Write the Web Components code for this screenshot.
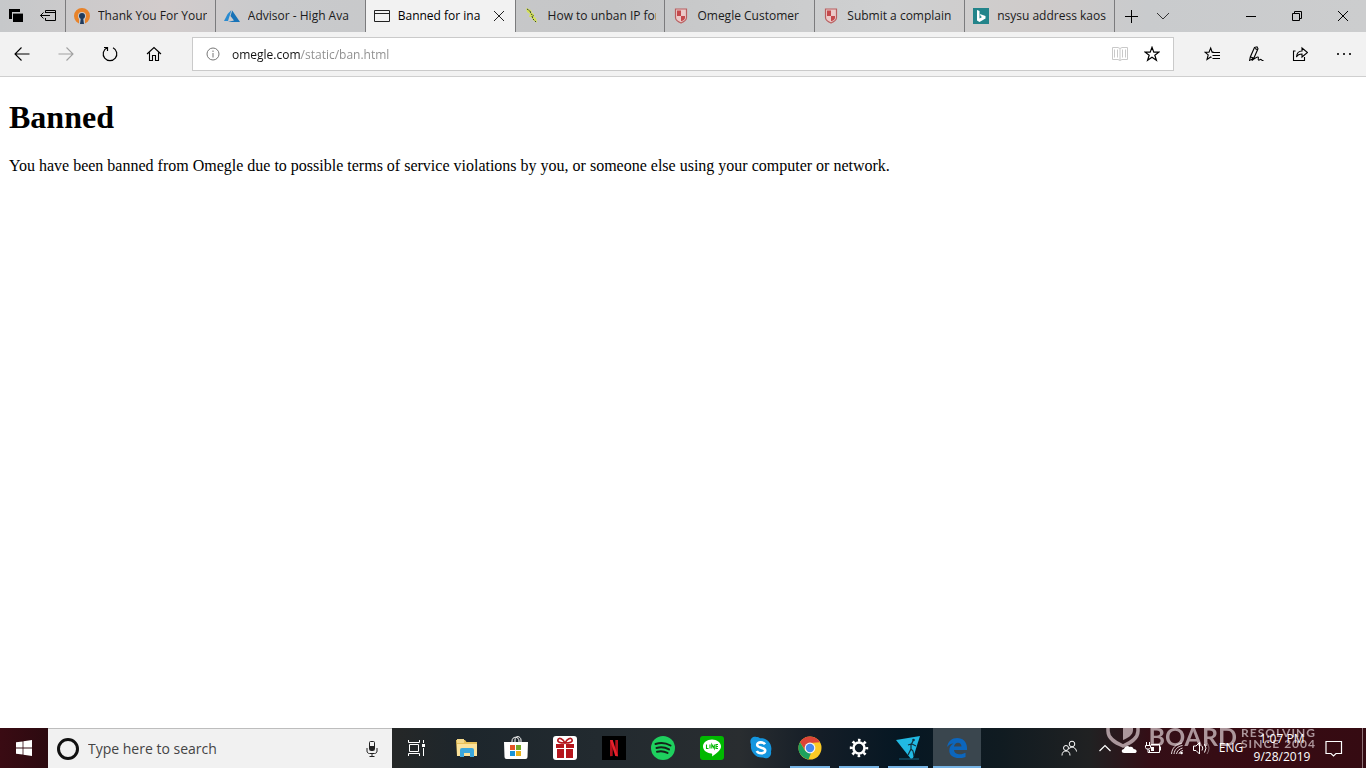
<!DOCTYPE html>
<html lang="en">
<head>
<meta charset="utf-8">
<title>Banned for inappropriate behavior</title>
<style>
  html, body { margin: 0; height: 100%; }
  body { font-family: "Open Sans", "Noto Sans", sans-serif; font-size: 12px; color: #1b1b1b; background: #fff; overflow: hidden; }
</style>
</head>
<body>
<desk-screen></desk-screen>

<script>
const RESET = `
  :host, *, *::before, *::after { box-sizing: border-box; }
  button { font: inherit; color: inherit; background: none; border: 0; padding: 0; margin: 0; display: flex; align-items: center; justify-content: center; }
  svg { display: block; flex: none; }
`;

const ICONS = {
  setaside: [16, 16, `<path d="M1 1h11v3H4v7H1z" fill="#000"/><path d="M5 5h10v9H5z" fill="#000"/><path d="M5 5.500h10" stroke="#777" stroke-width="1"/>`],
  restoretabs: [16, 16, `<path d="M5.500 5V2.500h10v10h-10V10M5.500 4.500h10M.5 7.500H10M3.500 4.500l-3 3 3 3" fill="none" stroke="#000"/>`],
  vpn: [18, 18, `<circle cx="9" cy="9" r="6" fill="none" stroke="#e8832a" stroke-width="4"/><path d="M6 12h6v6H6z" fill="#c8c8ca"/><circle cx="9" cy="9" r="3" fill="#1f3a5c"/><path d="M8 10h2l1 7H7z" fill="#1f3a5c"/>`],
  azure: [16, 16, `<path d="M7.500 2 3.600 6 0 13h4z" fill="#2a8bd0"/><path d="M8.200 2.500 16 14H4l6-1.500L6.500 8z" fill="#1873b8"/>`],
  page: [16, 16, `<path d="M.5 2.500h15v11H.5zM.5 5.500h15" fill="none" stroke="#222"/>`],
  bolt: [16, 16, `<path d="m2 0 5 2 1 3 2 1 0 3 2 1 1 5-4-3-2-3H5l1-3-3-2z" fill="#d5e25a"/><path d="m3 1 3 2M6 3l1 3 3 2M8 8l1 3 3 3" fill="none" stroke="#38432b" stroke-dasharray="2 1"/>`],
  shield: [16, 16, `<path d="M2.500 1h11v8.500c0 3-3 4.500-5.500 5.500-2.500-1-5.500-2.500-5.500-5.500z" fill="#ebc9c8" stroke="#b95f60" stroke-width="1.200"/><path d="M4 2.500h4V8H4zM8 8h4v2c0 1.500-2 2.500-4 3.300z" fill="#c4494c"/>`],
  bing: [16, 16, `<path d="M0 0h16v16H0z" fill="#23848a"/><path d="m4 2 2.500 1v7.500L9 9 7.700 8.200 6.900 6 12.500 8v2.500L6.500 14 4 12.500z" fill="#fff"/>`],
  x10: [12, 12, `<path d="m1 1 10 10M11 1 1 11" stroke="#222" fill="none"/>`],
  plus: [14, 14, `<path d="M7.500 1v13M1 7.500h13" stroke="#000" fill="none"/>`],
  chevdown: [14, 14, `<path d="m1 4 6 6 6-6" stroke="#333" fill="none"/>`],
  min: [10, 10, `<path d="M0 5.500h10" stroke="#000"/>`],
  restore: [12, 12, `<path d="M1.500 3.500h7v7h-7zM3.500 3V1.500h7v7H9" stroke="#000" fill="none"/>`],
  close: [12, 12, `<path d="m1 1 10 10M11 1 1 11" stroke="#000" fill="none"/>`],
  back: [16, 16, `<path d="M15.500 8H1M7.500 1.500 1 8l6.500 6.500" stroke="#000" fill="none" stroke-width="1.100"/>`],
  fwd: [16, 16, `<path d="M.5 8H15M8.500 1.500 15 8l-6.500 6.500" stroke="#a0a0a0" fill="none" stroke-width="1.100"/>`],
  reload: [16, 16, `<path d="M5 1.700A6.800 6.800 0 1 0 11 1.700M2 1.500h3.500V5" stroke="#000" fill="none" stroke-width="1.200"/>`],
  home: [16, 16, `<path d="m1 8 7-6.500L15 8M3.500 6.500v8h3v-5h3v5h3v-8" stroke="#000" fill="none" stroke-width="1.100"/>`],
  info: [14, 14, `<circle cx="7" cy="7" r="6" fill="none" stroke="#777"/><path d="M7 6v4.500M7 3.500V5" stroke="#777"/>`],
  book: [16, 16, `<path d="M.5 1.500H6l2 1 2-1h5.500v12H10l-2 1-2-1H.5zM8 2.500v12M2.500 3.500v8M5.500 3.500v8M10.500 3.500v8M13.500 3.500v8" stroke="#c9c9c9" fill="none"/>`],
  star: [16, 16, `<path d="m8 1.300 1.800 4.900h5.100l-4.100 3.100 1.600 5L8 11.200l-4.400 3.100 1.600-5-4.100-3.100h5.100z" stroke="#000" fill="none" stroke-width="1.200"/>`],
  hub: [16, 16, `<path d="M9.500 6.100H8.100L6.700 2 5 6.200H1l3.200 2.700L3 13.500 6.700 11l.8.500M8.500 6.500H16M8.500 9.500H16M8.500 12.500H16" stroke="#000" fill="none" stroke-width="1.100"/>`],
  pen: [16, 16, `<path d="m1.500 15 .8-4L6.500 1.500 9 .8l1 2-4 9-3.500 2.500M2.500 11l3 1M7 2.500l2 1M4 14.500c3-2 4.500-4 6-3.500 1.200.5-.5 2.500.5 3s1.500-1 2.500-.5 1 1.300 2.500 1" stroke="#000" fill="none" stroke-width="1.100"/>`],
  share: [16, 16, `<path d="M3.500 5H1.500v9.500h11V11M4.500 11c.3-4 2.500-6 5.500-6V2l5.500 4.500L10 11V8C7 8 5.500 9 4.500 11z" stroke="#000" fill="none" stroke-width="1.100"/>`],
  dots: [16, 16, `<path d="M1 7h2v2H1zM7 7h2v2H7zM13 7h2v2h-2z" fill="#333"/>`],
  windows: [16, 16, `<path d="m0 2.300 6.600-.9v6.200H0zM7.400 1.300 16 0v7.600H7.400zM0 8.400h6.600v6.200L0 13.700zM7.400 8.400H16V16l-8.600-1.300z" fill="#fff"/>`],
  mic: [12, 18, `<rect x="3.500" y="1.500" width="5" height="9" rx="1" fill="none" stroke="#222"/><path d="M4 6h4v4H4z" fill="#222"/><path d="M1 8v3c0 1.500 1 2.500 2.500 2.500h5c1.500 0 2.500-1 2.500-2.500V8M6 13.500V16M3.500 16.500h5" stroke="#222" fill="none"/>`],
  taskview: [18, 16, `<path d="M1.500 0v2.500h11V0M1.500 16v-2.500h11V16M2.500 4.500v7h9v-7zM16.500 0v3M16.500 8v8" stroke="#fff" fill="none"/><path d="M15 4h3v3h-3z" fill="#fff"/>`],
  files: [22, 20, `<path d="M0 2h9l1.500 2H21v14H1z" fill="#e8c15a"/><path d="M1 1h7v4H1z" fill="#f3d88a"/><path d="M1 6h20v12H1z" fill="#fbe29b"/><path d="M4 19v-7q0-2 2-2h10q2 0 2 2v7h-4v-4H8v4z" fill="#3ba7dc"/>`],
  store: [24, 24, `<path d="M8 7V5c0-5 7-5 7 0v2M11 7V4c0-5 6-4 6 0v3" stroke="#fff" fill="none"/><path d="M0 6h24l-.5 15q0 2-2 2h-19q-2 0-2-2z" fill="#fff"/><path d="M6 9h5v5H6z" fill="#e55426"/><path d="M12 9h5v5h-5z" fill="#75a827"/><path d="M6 15h5v5H6z" fill="#1794d8"/><path d="M12 15h5v5h-5z" fill="#e7b21c"/>`],
  gift: [24, 24, `<rect width="24" height="24" rx="3" fill="#fff"/><path d="M3 8h8v4H3zM13 8h8v4h-8zM4 13h7v9H4zM13 13h7v9h-7z" fill="#b5161d"/><path d="M12 7C7 7 4 6 5 3.500S10 3 12 7c2-4 6-6 7-3.500S17 7 12 7z" fill="none" stroke="#b5161d" stroke-width="1.600"/>`],
  netflix: [24, 24, `<path d="M0 0h24v24H0z" fill="#000"/><path d="M8 4h2.700v16L8 20.300zM13.300 4H16v16.300l-2.700-.3z" fill="#b3101a"/><path d="M8 4h2.700L16 20.300l-2.700-.3z" fill="#e8222c"/>`],
  spotify: [24, 24, `<circle cx="12" cy="12" r="12" fill="#1ed05e"/><path d="M4.500 8c5-1.500 10.500-1 15 1.500M5.500 12c4-1.200 8.500-.8 12.500 1.400M6 15.700c3.500-1 7-.7 10.500 1.200" stroke="#14231a" fill="none" stroke-width="2" stroke-linecap="round"/>`],
  line: [24, 24, `<rect width="24" height="24" rx="3" fill="#00b800"/><path d="M12 3.500c5 0 9 3 9 7 0 3.500-4 6.500-9 10 .5-2 .2-3-.5-3.100C6.500 17 3 14.200 3 10.500c0-4 4-7 9-7z" fill="#fff"/><path d="M6.500 8.500v4h2M10 8.500v4M11.800 12.500v-4l2.500 4v-4M18 8.500h-2v4h2M16 10.500h2" stroke="#00b800" fill="none" stroke-width="1.100"/>`],
  skype: [24, 24, `<path d="M7.500 1C3 0 0 4 2 8.500 1 15 6 22 14 21.500c4 2.500 9-1 8-6C24 8 18 1.500 11 2.200 10 1.500 9 1 7.500 1z" fill="#1496df"/><path d="M16 8.200C14.500 5.800 8 5.500 8.200 9c.2 3.200 8 2.200 8 5.600 0 3.500-7 3.500-8.400.4" stroke="#fff" fill="none" stroke-width="2.600"/>`],
  chrome: [24, 24, `<circle cx="12" cy="12" r="11.500" fill="#fbc925"/><path d="M2 6.200A11.500 11.500 0 0 1 22 6.300L12 7 7 14z" fill="#dc4437"/><path d="M2 6.200 7.300 15 13 17l-2.500 6.400A11.500 11.500 0 0 1 2 6.200z" fill="#1fa15d"/><circle cx="12" cy="12" r="5.400" fill="#f4f4f4"/><circle cx="12" cy="12" r="4.200" fill="#4688ef"/>`],
  gear: [20, 20, `<circle cx="10" cy="10" r="5.500" fill="none" stroke="#fff" stroke-width="2.600"/><circle cx="10" cy="10" r="7.700" fill="none" stroke="#fff" stroke-width="3" stroke-dasharray="2.500 3.548" stroke-dashoffset="1.250"/>`],
  proxy: [26, 24, `<path d="m1 4 24-4-7 22-2 1z" fill="#21b9e3"/><path d="m18 5-2 4v4l-3 6M17 8l4 2M16 8l-3 1M16 13l2 2 1 5" stroke="#12313f" fill="none" stroke-width="1.200"/><circle cx="18.500" cy="4" r="1.300" fill="#12313f"/><path d="M4 23h20" stroke="#176784"/>`],
  edge: [20, 20, `<path d="M0 9C1.200 3 5 0 10.200 0 16 0 20 4 20 10v2H7c.2 3 3 4.200 6 4.200 2 0 4-.6 5.500-1.500V19c-1.500.8-4 1.200-6.500 1.200C6 20 2.300 17 2.300 12.500c0-3 1.500-5.500 4.200-7C3.800 5.700 1.500 7 0 9zm7-.5h7.500C14.500 6 13 4.700 11 4.700S7.400 6.200 7 8.500z" fill="#0c66bd"/>`],
  people: [16, 16, `<circle cx="5" cy="8" r="2.500" fill="none" stroke="#fff"/><circle cx="11" cy="4" r="2.800" fill="none" stroke="#fff"/><path d="M1 15.500c0-3 1.500-4.500 4-4.500s4 1.500 4 4.500M8 8.500c3-2.500 7-1 7.500 3" stroke="#fff" fill="none"/>`],
  chevup: [14, 14, `<path d="m1.500 10 5.500-5.500L12.500 10" stroke="#fff" fill="none" stroke-width="1.200"/>`],
  cloud: [16, 16, `<path d="M3 13c-3 0-3-4 0-4 .5-3 4-4 5.500-2 2-1 4 .3 4 2C16.500 9 16.500 13 13.500 13z" fill="#fff"/>`],
  battery: [16, 16, `<path d="M6 4.500h8.500v8H4.500V10M15.500 6.500v4M1.500 2v3M4.500 2v3M.5 5.500h5v2l-1 1.500h-3l-1-1.500zM3 9v3.500h2" stroke="#fff" fill="none"/><path d="M6 7h3v4H6z" fill="#fff"/>`],
  wifi: [16, 16, `<path d="M2.500 14C3 8 7 4 13 3M5 14c.5-4.500 3.500-7.500 8.500-8.500M7.500 14c.5-3 2.500-5 6-6M10 14c.2-1.500 1.500-3 4-3.500" stroke="#e7dadd" fill="none"/><circle cx="12.500" cy="13" r="1.300" fill="#fff"/>`],
  sound: [18, 16, `<path d="M1.500 6v4.500H4l3.500 3.500V2.500L4 6zM10 6q1.500 2 0 4.500M12.500 4q3 4 0 8.500" stroke="#fff" fill="none"/><path d="M15 2.500q4 5.500 0 11.500" stroke="#8c7177" fill="none"/>`],
  note: [18, 18, `<path d="M1 2.500h15.500v12H11L8.500 17 6 14.500H1z" stroke="#fff" fill="none" stroke-width="1.200"/>`],
  crest: [34, 40, `<path d="M2 0v22c0 8 8 12 15 15 7-3 15-7 15-15V0" fill="none" stroke="currentColor" stroke-width="3.500"/><path d="M17 0h10v21c0 5-5 8-10 10z" fill="currentColor"/>`]
};

class UiIcon extends HTMLElement {
  constructor() { super(); this.attachShadow({ mode: "open" }); }
  connectedCallback() {
    const [w, h, body] = ICONS[this.getAttribute("name")];
    this.shadowRoot.innerHTML = `<style>:host{display:block;flex:none}svg{display:block}</style>
      <svg width="${w}" height="${h}" viewBox="0 0 ${w} ${h}" aria-hidden="true">${body}</svg>`;
  }
}
customElements.define("ui-icon", UiIcon);

function define(name, html) {
  const template = document.createElement("template");
  template.innerHTML = html;
  customElements.define(name, class extends HTMLElement {
    constructor() {
      super();
      this.attachShadow({ mode: "open" }).append(template.content.cloneNode(true));
    }
    connectedCallback() {
      const label = this.getAttribute("label");
      const button = this.shadowRoot.querySelector("button");
      if (label && button) button.setAttribute("aria-label", label);
    }
  });
}

define("tool-button", `<style>${RESET}
  :host { display: block; width: 44px; height: 100%; flex: none; }
  button { width: 100%; height: 100%; }
</style><button type="button"><slot></slot></button>`);

define("browser-tab", `<style>${RESET}
  :host { display: flex; flex: 0 1 150px; min-width: 0; border-left: 1px solid #7b7b7d; }
  :host([active]) { background: #f2f2f2; color: #000; }
  .tab { flex: 1; min-width: 0; height: 100%; padding: 0 8px; gap: 8px; justify-content: flex-start; }
  .icon { width: 16px; display: flex; justify-content: center; flex: none; }
  .title { flex: 1; min-width: 0; overflow: hidden; white-space: nowrap; text-align: left; line-height: 20px; }
  .end { display: none; }
  :host([active]) .end { display: flex; align-items: center; padding-right: 10px; }
</style>
<button class="tab" type="button"><span class="icon"><slot name="icon"></slot></span><span class="title"><slot></slot></span></button>
<span class="end"><slot name="close"></slot></span>`);

define("tab-strip", `<style>${RESET}
  :host { display: flex; height: 32px; flex: none; background: linear-gradient(90deg, #c6c8ca, #d2cccc 12%, #c9cacc 20%, #c5c6c7 45%, #cfd0d1 65%, #cfcbca 76%, #c9cbcd 84%, #cccdce); }
  .lead { display: flex; width: 65px; flex: none; }
  .tabs { display: flex; flex: 0 1 1050px; min-width: 0; border-right: 1px solid #7b7b7d; }
  .extra { display: flex; }
  .window { display: flex; margin-left: auto; }
  .lead tool-button, .extra tool-button { width: 32px; }
  .window tool-button { width: 46px; }
  .small { width: 12px; }
</style>
<div class="lead">
  <tool-button label="Tabs you've set aside"><ui-icon name="setaside"></ui-icon></tool-button>
  <tool-button label="Set these tabs aside"><ui-icon name="restoretabs"></ui-icon></tool-button>
</div>
<div class="tabs">
  <browser-tab><ui-icon slot="icon" name="vpn"></ui-icon>Thank You For Your</browser-tab>
  <browser-tab><ui-icon slot="icon" name="azure"></ui-icon>Advisor - High Ava</browser-tab>
  <browser-tab active><ui-icon slot="icon" name="page"></ui-icon>Banned for ina<tool-button class="small" slot="close" label="Close tab"><ui-icon name="x10"></ui-icon></tool-button></browser-tab>
  <browser-tab><ui-icon slot="icon" name="bolt"></ui-icon>How to unban IP for</browser-tab>
  <browser-tab><ui-icon slot="icon" name="shield"></ui-icon>Omegle Customer</browser-tab>
  <browser-tab><ui-icon slot="icon" name="shield"></ui-icon>Submit a complain</browser-tab>
  <browser-tab><ui-icon slot="icon" name="bing"></ui-icon>nsysu address kaos</browser-tab>
</div>
<div class="extra">
  <tool-button label="New tab"><ui-icon name="plus"></ui-icon></tool-button>
  <tool-button label="Show tab previews"><ui-icon name="chevdown"></ui-icon></tool-button>
</div>
<div class="window">
  <tool-button label="Minimize"><ui-icon name="min"></ui-icon></tool-button>
  <tool-button label="Restore"><ui-icon name="restore"></ui-icon></tool-button>
  <tool-button label="Close"><ui-icon name="close"></ui-icon></tool-button>
</div>`);

define("address-bar", `<style>${RESET}
  :host { display: flex; align-items: center; height: 45px; flex: none; background: #f2f2f2; border-bottom: 1px solid #cfcfcf; }
  .box { display: flex; align-items: center; flex: 1; min-width: 0; height: 34px; margin: 0 16px; padding: 0 5px 0 13px; gap: 12px; background: #fff; border: 1px solid #cacaca; }
  .nav { display: flex; height: 100%; width: 176px; flex: none; }
  .tools { display: flex; height: 100%; flex: none; }
  .marks { display: flex; height: 100%; }
  .marks tool-button { width: 32px; }
  input { flex: 1; min-width: 0; height: 20px; border: 0; padding: 0; outline: 0; font: inherit;
    background: linear-gradient(90deg, #111 69px, #8c8c8c 69px) text; -webkit-text-fill-color: transparent; }
</style>
<div class="nav">
  <tool-button label="Back"><ui-icon name="back"></ui-icon></tool-button>
  <tool-button label="Forward"><ui-icon name="fwd"></ui-icon></tool-button>
  <tool-button label="Refresh"><ui-icon name="reload"></ui-icon></tool-button>
  <tool-button label="Home"><ui-icon name="home"></ui-icon></tool-button>
</div>
<div class="box">
  <ui-icon name="info"></ui-icon>
  <input type="text" aria-label="Address" value="omegle.com/static/ban.html">
  <div class="marks">
    <tool-button label="Reading view"><ui-icon name="book"></ui-icon></tool-button>
    <tool-button label="Add to favorites"><ui-icon name="star"></ui-icon></tool-button>
  </div>
</div>
<div class="tools">
  <tool-button label="Favorites"><ui-icon name="hub"></ui-icon></tool-button>
  <tool-button label="Add notes"><ui-icon name="pen"></ui-icon></tool-button>
  <tool-button label="Share"><ui-icon name="share"></ui-icon></tool-button>
  <tool-button label="Settings and more"><ui-icon name="dots"></ui-icon></tool-button>
</div>`);

define("ban-page", `<style>
  :host { display: block; flex: 1; min-height: 0; overflow: auto; padding: 22px 9px 0; background: #fff; color: #000; font: 16px/18px "Liberation Serif", "Times New Roman", serif; }
  h1 { font-size: 32px; line-height: 37px; margin: 0 0 21px; }
  p { margin: 0; }
</style>
<h1>Banned</h1>
<p>You have been banned from Omegle due to possible terms of service violations by you, or someone else using your computer or network.</p>`);

define("task-button", `<style>${RESET}
  :host { display: flex; width: 48px; height: 100%; flex: none; position: relative; }
  button { width: 100%; height: 100%; }
  :host([running]) { padding: 0 4px; }
  :host([running]) button { border-bottom: 2px solid #76b3e4; padding-top: 2px; }
  :host([current]) { padding: 0; background: #3a464e; }
</style><button type="button"><slot></slot></button>`);

define("site-watermark", `<style>${RESET}
  :host { display: flex; position: absolute; right: 50px; bottom: 19px; align-items: flex-end; gap: 4px; color: #b9a5aa; opacity: .9; font-family: Lato, sans-serif; white-space: nowrap; pointer-events: none; }
  .name { font-size: 25px; line-height: 26px; font-weight: 700; margin-left: 4px; }
  .motto { font-size: 12px; line-height: 11px; font-weight: 700; letter-spacing: 1px; }
  .motto span { display: block; }
</style>
<ui-icon name="crest"></ui-icon><span class="name">BOARD</span><span class="motto"><span>RESOLVING</span><span>SINCE 2004</span></span>`);

define("task-bar", `<style>${RESET}
  :host { display: flex; position: relative; height: 40px; flex: none; overflow: hidden; color: #fff;
    background: linear-gradient(90deg, #3a0b13 0, #2c0a10 48px, #252727 392px, #1d262c 466px, #222a2f 600px, #292d30 740px, #141d27 820px, #061723 900px, #101b21 1000px, #202122 1090px, #340e16 1150px, #370b13 1250px, #350b12); }
  .search { display: flex; align-items: center; width: 344px; height: 100%; flex: 0 1 344px; padding: 0 8px; background: #f1f1f1; border-top: 1px solid #bdbdbd; color: #333; }
  .ring { width: 22px; height: 22px; margin: 0 9px 0 1px; border: 3px solid #111; border-radius: 50%; flex: none; }
  input { flex: 1; min-width: 0; border: 0; padding: 0; outline: 0; background: none; font: inherit; font-size: 14px; color: #333; height: 20px; }
  input::placeholder { color: #444; opacity: 1; }
  .search tool-button { width: 24px; }
  .apps { display: flex; gap: 1px; margin-left: 3px; }
  .tray { display: flex; margin-left: auto; align-items: center; position: relative; }
  .tray tool-button { width: 24px; }
  .tray .people { width: 48px; }
  .lang, .clock { height: 100%; line-height: 18px; }
  .lang { width: 36px; }
  .clock { width: 66px; flex-direction: column; }
  .tray .note { width: 38px; }
  .peek { width: 4px; height: 100%; border-left: 1px solid #8d7176; margin-left: 9px; }
</style>
<task-button label="Start"><ui-icon name="windows"></ui-icon></task-button>
<div class="search"><span class="ring"></span>
  <input type="text" aria-label="Search" placeholder="Type here to search">
  <tool-button label="Speak"><ui-icon name="mic"></ui-icon></tool-button>
</div>
<task-button label="Task view"><ui-icon name="taskview"></ui-icon></task-button>
<div class="apps">
  <task-button label="File Explorer"><ui-icon name="files"></ui-icon></task-button>
  <task-button label="Store"><ui-icon name="store"></ui-icon></task-button>
  <task-button label="Gifts"><ui-icon name="gift"></ui-icon></task-button>
  <task-button label="Netflix"><ui-icon name="netflix"></ui-icon></task-button>
  <task-button label="Spotify"><ui-icon name="spotify"></ui-icon></task-button>
  <task-button label="LINE"><ui-icon name="line"></ui-icon></task-button>
  <task-button label="Skype"><ui-icon name="skype"></ui-icon></task-button>
  <task-button label="Chrome" running><ui-icon name="chrome"></ui-icon></task-button>
  <task-button label="Settings" running><ui-icon name="gear"></ui-icon></task-button>
  <task-button label="Proxy" running><ui-icon name="proxy"></ui-icon></task-button>
  <task-button label="Edge" running current><ui-icon name="edge"></ui-icon></task-button>
</div>
<site-watermark></site-watermark>
<div class="tray">
  <tool-button class="people" label="People"><ui-icon name="people"></ui-icon></tool-button>
  <tool-button label="Show hidden icons"><ui-icon name="chevup"></ui-icon></tool-button>
  <tool-button label="OneDrive"><ui-icon name="cloud"></ui-icon></tool-button>
  <tool-button label="Battery"><ui-icon name="battery"></ui-icon></tool-button>
  <tool-button label="Network"><ui-icon name="wifi"></ui-icon></tool-button>
  <tool-button label="Volume"><ui-icon name="sound"></ui-icon></tool-button>
  <button class="lang" type="button">ENG</button>
  <button class="clock" type="button"><span>1:07 PM</span><span>9/28/2019</span></button>
  <tool-button class="note" label="Notifications"><ui-icon name="note"></ui-icon></tool-button>
  <span class="peek"></span>
</div>`);

define("desk-screen", `<style>
  :host { display: flex; flex-direction: column; height: 100vh; }
</style>
<tab-strip></tab-strip>
<address-bar></address-bar>
<ban-page></ban-page>
<task-bar></task-bar>`);
</script>
</body>
</html>
